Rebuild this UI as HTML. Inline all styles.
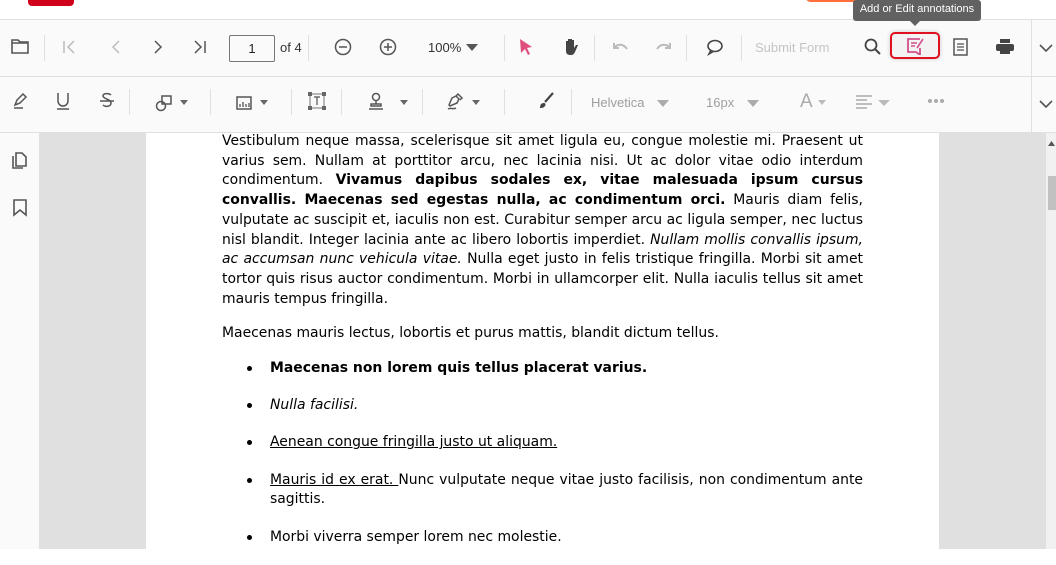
<!DOCTYPE html>
<html><head><style>
*{margin:0;padding:0;box-sizing:border-box}
body{width:1056px;height:549px;overflow:hidden;background:#fff;font-family:"Liberation Sans",Arial,sans-serif;position:relative}
.abs{position:absolute}
.tb{position:absolute;left:0;width:1056px;background:#fafafa;border-bottom:1px solid #e0e0e0}
.sep{position:absolute;width:1px;background:#e0e0e0}
.ic{position:absolute}
.doc{position:absolute;left:222px;top:132px;width:641px;font-family:"DejaVu Sans",sans-serif;font-size:13.95px;line-height:19.7px;color:#000;text-align:justify}
.doc p{margin-bottom:15px}
.doc ul{margin-left:48px;list-style:none}
.doc li{position:relative;margin-bottom:17.5px}
.doc li:before{content:"";position:absolute;left:-23px;top:7px;width:5px;height:5px;border-radius:50%;background:#000}
.g{color:#9e9e9e;font-size:13px}
</style></head><body>
<div class="abs" style="left:0;top:0;width:1056px;height:20px;background:#fff;border-bottom:1px solid #e0e0e0"></div>
<div class="abs" style="left:28px;top:-8px;width:46px;height:14px;background:#d0021b;border-radius:4px"></div>
<div class="abs" style="left:805px;top:-10px;width:60px;height:12px;background:#ff6f3c;border-radius:6px"></div>

<div class="tb" style="top:20px;height:57px"></div>
<div class="tb" style="top:77px;height:56px"></div>
<div class="sep" style="left:1031px;top:20px;height:113px"></div>

<svg class="ic" style="left:11px;top:38px" width="18" height="16" viewBox="0 0 18 16"><path d="M1 2h6l2 2h8v11H1z M1 5h16" fill="none" stroke="#555" stroke-width="1.6"/></svg>
<div class="sep" style="left:44px;top:35px;height:26px"></div>
<svg class="ic" style="left:62px;top:39px" width="16" height="16"><path d="M2 2v12M12 2l-6 6 6 6" fill="none" stroke="#bbb" stroke-width="1.5"/></svg>
<svg class="ic" style="left:108px;top:39px" width="16" height="16"><path d="M11 2l-6 6 6 6" fill="none" stroke="#bbb" stroke-width="1.5"/></svg>
<svg class="ic" style="left:150px;top:39px" width="16" height="16"><path d="M5 2l6 6-6 6" fill="none" stroke="#555" stroke-width="1.5"/></svg>
<svg class="ic" style="left:192px;top:39px" width="16" height="16"><path d="M3 2l6 6-6 6M13 2v12" fill="none" stroke="#555" stroke-width="1.5"/></svg>
<div class="abs" style="left:229px;top:35px;width:46px;height:27px;border:1px solid #777;border-radius:2px;font-size:13px;text-align:center;line-height:25px;color:#222">1</div>
<div class="abs" style="left:280px;top:40px;font-size:13px;color:#333">of 4</div>
<div class="sep" style="left:308px;top:35px;height:26px"></div>
<svg class="ic" style="left:334px;top:38px" width="18" height="18"><circle cx="9" cy="9" r="7.5" fill="none" stroke="#555" stroke-width="1.5"/><path d="M5 9h8" stroke="#555" stroke-width="1.5"/></svg>
<svg class="ic" style="left:379px;top:38px" width="18" height="18"><circle cx="9" cy="9" r="7.5" fill="none" stroke="#555" stroke-width="1.5"/><path d="M5 9h8M9 5v8" stroke="#555" stroke-width="1.5"/></svg>
<div class="abs" style="left:428px;top:40px;font-size:13px;color:#333">100%</div>
<svg class="ic" style="left:466px;top:44px" width="12" height="7"><path d="M0 0h12L6 7z" fill="#555"/></svg>
<div class="sep" style="left:504px;top:35px;height:26px"></div>
<svg class="ic" style="left:519px;top:38px" width="14" height="18"><path d="M1 1l12 8-5 1 3 6-2 1-3-6-4 4z" fill="#e0507f"/></svg>
<svg class="ic" style="left:562px;top:37px" width="18" height="18"><path d="M4 9V4h2v5V2h2v7V2h2v7V3h2v8l2-3h2l-3 7c-1 2-2 3-4 3H8c-3 0-4-2-4-4z" fill="#444"/></svg>
<div class="sep" style="left:594px;top:35px;height:26px"></div>
<svg class="ic" style="left:611px;top:40px" width="18" height="14"><path d="M3 3v5h5M3 8c3-4 9-5 13 1" fill="none" stroke="#bbb" stroke-width="2"/></svg>
<svg class="ic" style="left:655px;top:40px" width="18" height="14"><path d="M15 3v5h-5M15 8c-3-4-9-5-13 1" fill="none" stroke="#bbb" stroke-width="2"/></svg>
<div class="sep" style="left:686px;top:35px;height:26px"></div>
<svg class="ic" style="left:706px;top:38px" width="18" height="18"><ellipse cx="9" cy="8" rx="7" ry="5.5" fill="none" stroke="#444" stroke-width="1.6"/><path d="M5 12l-2 4 5-3" fill="none" stroke="#444" stroke-width="1.6"/></svg>
<div class="sep" style="left:741px;top:35px;height:26px"></div>
<div class="abs" style="left:755px;top:40px;font-size:13px;color:#c4c4c4">Submit Form</div>
<svg class="ic" style="left:864px;top:38px" width="18" height="18"><circle cx="7" cy="7" r="5.5" fill="none" stroke="#444" stroke-width="1.8"/><path d="M11 11l5 5" stroke="#444" stroke-width="2"/></svg>
<div class="abs" style="left:890px;top:32px;width:50px;height:27px;border:2px solid #e0101e;border-radius:5px;background:#f3f3f3;box-shadow:0 0 4px rgba(0,0,0,.2)"></div>
<svg class="ic" style="left:906px;top:37px" width="20" height="18"><path d="M14 2H2v13h8l4 3v-7" fill="none" stroke="#d2508a" stroke-width="1.8"/><path d="M5 6h6M5 9h4M11 11l6-9" stroke="#d2508a" stroke-width="1.6"/></svg>
<svg class="ic" style="left:953px;top:38px" width="15" height="18"><rect x="1" y="1" width="13" height="16" fill="none" stroke="#555" stroke-width="1.5"/><path d="M4 6h7M4 9h7M4 12h7" stroke="#555" stroke-width="1.3"/></svg>
<svg class="ic" style="left:996px;top:39px" width="18" height="16"><rect x="4" y="0" width="10" height="4" fill="#444"/><rect x="0" y="5" width="18" height="7" rx="2" fill="#444"/><rect x="4" y="10" width="10" height="5" fill="#444"/></svg>
<svg class="ic" style="left:1039px;top:44px" width="14" height="9"><path d="M1 1l6 6 6-6" fill="none" stroke="#555" stroke-width="1.6"/></svg>

<div class="abs" style="left:853px;top:0;width:128px;height:21px;background:#616161;border-radius:3px;color:#fff;font-size:11px;text-align:center;line-height:19px">Add or Edit annotations</div>
<div class="abs" style="left:910px;top:21px;width:0;height:0;border-left:5px solid transparent;border-right:5px solid transparent;border-top:5px solid #616161"></div>

<svg class="ic" style="left:12px;top:92px" width="16" height="18"><path d="M3 13l2-5 6-6 3 3-6 6z M2 16h9" fill="none" stroke="#555" stroke-width="1.5"/></svg>
<svg class="ic" style="left:56px;top:92px" width="14" height="18"><path d="M2 1v8a5 5 0 0 0 10 0V1M1 17h12" fill="none" stroke="#555" stroke-width="1.5"/></svg>
<svg class="ic" style="left:99px;top:92px" width="16" height="18"><path d="M12 3c-2-2-8-2-8 1s8 3 8 7-6 4-8 2M1 9h14" fill="none" stroke="#555" stroke-width="1.5"/></svg>
<div class="sep" style="left:129px;top:89px;height:26px"></div>
<svg class="ic" style="left:155px;top:94px" width="18" height="18"><circle cx="6" cy="12" r="4.5" fill="none" stroke="#555" stroke-width="1.5"/><rect x="7" y="2" width="9" height="8" fill="none" stroke="#555" stroke-width="1.5"/></svg>
<svg class="ic" style="left:180px;top:100px" width="8" height="5"><path d="M0 0h8L4 5z" fill="#666"/></svg>
<div class="sep" style="left:210px;top:89px;height:26px"></div>
<svg class="ic" style="left:236px;top:96px" width="16" height="14"><rect x="1" y="1" width="14" height="12" fill="none" stroke="#555" stroke-width="1.5"/><path d="M4 11V8M7 11V6M10 11V8M13 11V7" stroke="#555" stroke-width="1.3"/></svg>
<svg class="ic" style="left:260px;top:100px" width="8" height="5"><path d="M0 0h8L4 5z" fill="#666"/></svg>
<div class="sep" style="left:291px;top:89px;height:26px"></div>
<svg class="ic" style="left:308px;top:92px" width="18" height="18"><rect x="2" y="2" width="14" height="14" fill="none" stroke="#777" stroke-width="1"/><rect x="0" y="0" width="4" height="4" fill="#666"/><rect x="14" y="0" width="4" height="4" fill="#666"/><rect x="0" y="14" width="4" height="4" fill="#666"/><rect x="14" y="14" width="4" height="4" fill="#666"/><path d="M6 5h6M9 5v8" stroke="#555" stroke-width="1.2"/></svg>
<div class="sep" style="left:341px;top:89px;height:26px"></div>
<svg class="ic" style="left:367px;top:92px" width="18" height="18"><circle cx="9" cy="5" r="3.5" fill="none" stroke="#555" stroke-width="1.5"/><path d="M9 9v3M4 12h10v2H4zM2 17h14" fill="none" stroke="#555" stroke-width="1.5"/></svg>
<svg class="ic" style="left:400px;top:100px" width="8" height="5"><path d="M0 0h8L4 5z" fill="#666"/></svg>
<div class="sep" style="left:422px;top:89px;height:26px"></div>
<svg class="ic" style="left:446px;top:92px" width="18" height="18"><path d="M3 13l3-7 4-2 3 3-2 4-7 3zM10 4l2-2 4 4-2 2M2 17c3-2 5 1 8-1" fill="none" stroke="#555" stroke-width="1.5"/></svg>
<svg class="ic" style="left:472px;top:100px" width="8" height="5"><path d="M0 0h8L4 5z" fill="#666"/></svg>
<div class="sep" style="left:504px;top:89px;height:26px"></div>
<svg class="ic" style="left:538px;top:92px" width="16" height="18"><path d="M15 1l-8 9" stroke="#444" stroke-width="2.2"/><path d="M2 16c0-3 1-5 4-5 2 0 2 3 0 4-1 1-3 1-4 1z" fill="#444"/></svg>
<div class="sep" style="left:571px;top:89px;height:26px"></div>
<div class="abs g" style="left:591px;top:95px">Helvetica</div>
<svg class="ic" style="left:657px;top:100px" width="12" height="7"><path d="M0 0h12L6 7z" fill="#aaa"/></svg>
<div class="abs g" style="left:706px;top:95px">16px</div>
<svg class="ic" style="left:747px;top:100px" width="12" height="7"><path d="M0 0h12L6 7z" fill="#aaa"/></svg>
<div class="abs" style="left:800px;top:91px;font-size:19px;color:#aaa">A</div>
<svg class="ic" style="left:818px;top:100px" width="8" height="5"><path d="M0 0h8L4 5z" fill="#bbb"/></svg>
<svg class="ic" style="left:856px;top:95px" width="16" height="14"><path d="M0 1h16M0 5h11M0 9h16M0 13h11" stroke="#aaa" stroke-width="1.6"/></svg>
<svg class="ic" style="left:878px;top:100px" width="12" height="6"><path d="M0 0h12L6 6z" fill="#bbb"/></svg>
<svg class="ic" style="left:928px;top:99px" width="16" height="4"><circle cx="2" cy="2" r="2" fill="#aaa"/><circle cx="8" cy="2" r="2" fill="#aaa"/><circle cx="14" cy="2" r="2" fill="#aaa"/></svg>
<svg class="ic" style="left:1039px;top:100px" width="14" height="9"><path d="M1 1l6 6 6-6" fill="none" stroke="#555" stroke-width="1.6"/></svg>

<div class="abs" style="left:0;top:133px;width:40px;height:416px;background:#fafafa;border-right:1px solid #e0e0e0"></div>
<svg class="ic" style="left:12px;top:151px" width="16" height="18"><path d="M4 2h6l4 4v9H4zM1 5v12h10" fill="none" stroke="#555" stroke-width="1.6"/></svg>
<svg class="ic" style="left:13px;top:199px" width="14" height="18"><path d="M1 1h12v15l-6-5-6 5z" fill="none" stroke="#555" stroke-width="1.6"/></svg>
<div class="abs" style="left:40px;top:133px;width:1006px;height:416px;background:#e0e0e0"></div>
<div class="abs" style="left:146px;top:133px;width:793px;height:416px;background:#fff"></div>
<div class="abs" style="left:1046px;top:133px;width:10px;height:416px;background:#f1f1f1"></div>
<div class="abs" style="left:1048px;top:176px;width:8px;height:34px;background:#c1c1c1"></div>
<svg class="ic" style="left:1048px;top:141px" width="7" height="5"><path d="M0 5h7L3.5 0z" fill="#555"/></svg>

<div class="doc">
<p>Vestibulum neque massa, scelerisque sit amet ligula eu, congue molestie mi. Praesent ut varius sem. Nullam at porttitor arcu, nec lacinia nisi. Ut ac dolor vitae odio interdum condimentum. <b>Vivamus dapibus sodales ex, vitae malesuada ipsum cursus convallis. Maecenas sed egestas nulla, ac condimentum orci.</b> Mauris diam felis, vulputate ac suscipit et, iaculis non est. Curabitur semper arcu ac ligula semper, nec luctus nisl blandit. Integer lacinia ante ac libero lobortis imperdiet. <i>Nullam mollis convallis ipsum, ac accumsan nunc vehicula vitae.</i> Nulla eget justo in felis tristique fringilla. Morbi sit amet tortor quis risus auctor condimentum. Morbi in ullamcorper elit. Nulla iaculis tellus sit amet mauris tempus fringilla.</p>
<p>Maecenas mauris lectus, lobortis et purus mattis, blandit dictum tellus.</p>
<ul>
<li><b>Maecenas non lorem quis tellus placerat varius.</b></li>
<li><i>Nulla facilisi.</i></li>
<li><u>Aenean congue fringilla justo ut aliquam. </u></li>
<li><u>Mauris id ex erat. </u>Nunc vulputate neque vitae justo facilisis, non condimentum ante sagittis.</li>
<li>Morbi viverra semper lorem nec molestie.</li>
</ul>
</div>
</body></html>
